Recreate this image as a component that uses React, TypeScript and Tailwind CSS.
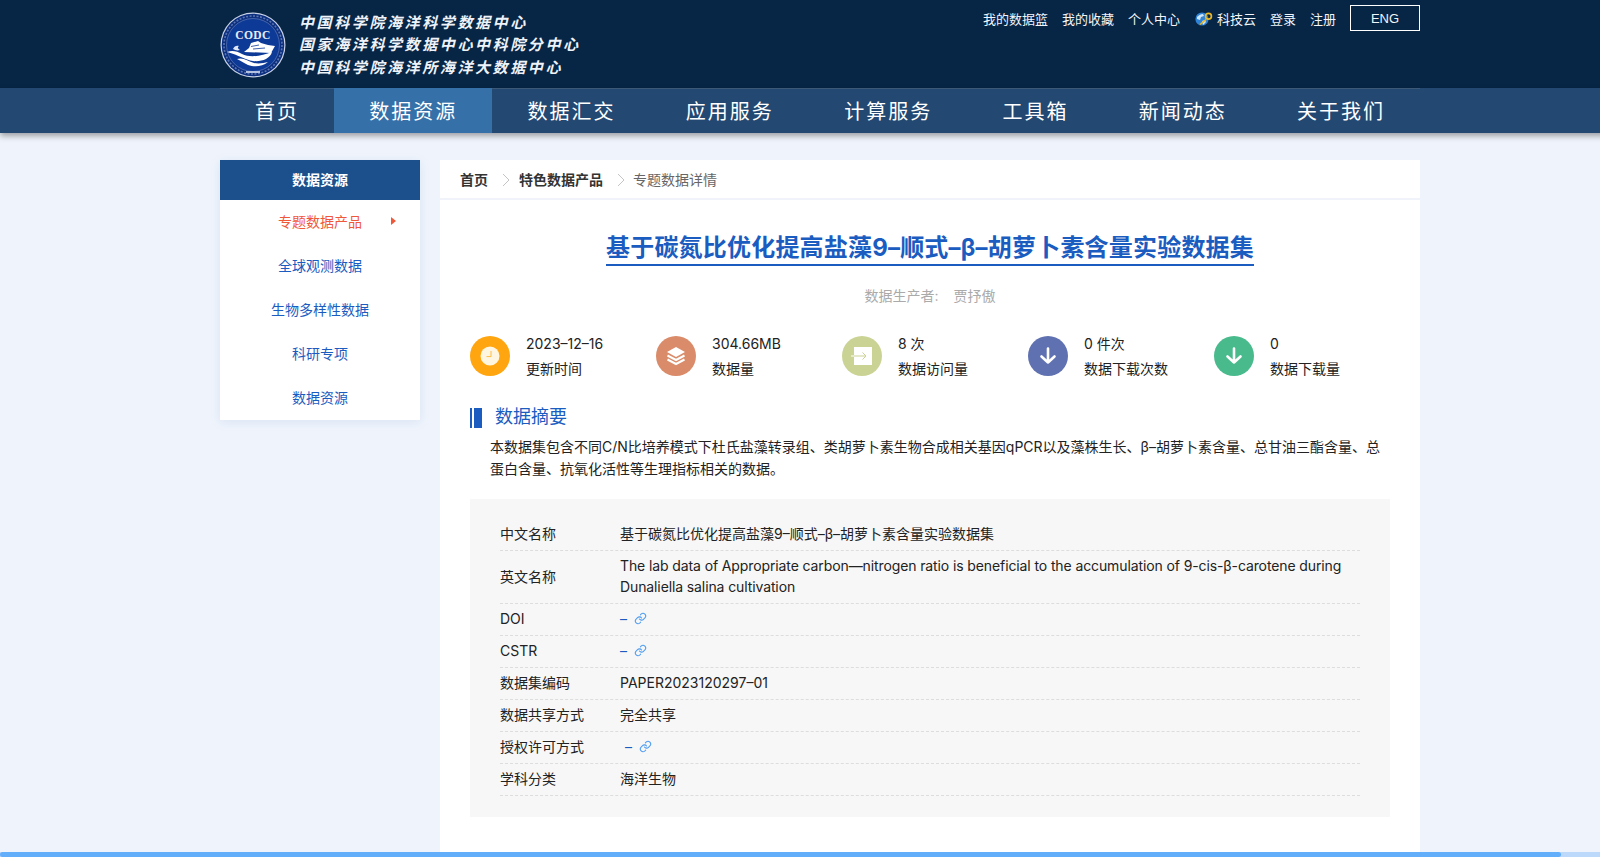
import React from "react";

const nav = ["首页", "数据资源", "数据汇交", "应用服务", "计算服务", "工具箱", "新闻动态", "关于我们"];
const side = ["专题数据产品", "全球观测数据", "生物多样性数据", "科研专项", "数据资源"];

function Logo() {
  return (
    <svg width="66" height="66" viewBox="0 0 66 66" className="shrink-0">
      <circle cx="33" cy="33" r="32.5" fill="#c9d3e6" />
      <circle cx="33" cy="33" r="31.3" fill="#0d2f7f" />
      <circle cx="33" cy="33" r="26.500" fill="#0e3a97" stroke="#7f97c9" strokeWidth="0.5" />
      <circle cx="33" cy="33" r="29" fill="none" stroke="#8ea5d2" strokeWidth="1.6" strokeDasharray="2 1.5" opacity="0.6" />
      <text x="33" y="27" textAnchor="middle" fontFamily="Liberation Serif" fontWeight="700" fontSize="11.500" letterSpacing="0.4" fill="#e8edf7">CODC</text>
      <path d="M24 40L29 36l2-5 7-2 3 2 7 2 7 1-4 7z" fill="#fff" />
      <path d="M31 34.500l8-1.500M33 37l12-1" stroke="#0e3a97" strokeWidth="0.8" />
      <path d="M7 40c5-2 10-1 15 2 8 4 20 2 30-2-2 7-11 10-19 9-8-1-14-6-26-9z" fill="#fff" />
      <path d="M17 47c6-2 11 2 17 4 5 1 10 0 14-1-6 5-14 5-20 3-4-2-7-4-11-6z" fill="#fff" />
      <path d="M13 37c1-3 4-4 6-3-2 1-1 3 1 4-3 1-5 0-7-1z" fill="#dfe6f4" />
      <rect x="26" y="59" width="14" height="2" fill="#b5c3e0" />
    </svg>
  );
}

function Globe() {
  return (
    <svg width="18" height="14" viewBox="0 0 18 14" className="shrink-0">
      <circle cx="7" cy="7" r="6.6" fill="#2f83d6" />
      <path d="M2 5c2-2 4-3 6-3l1 2-3 1-1 3-3-1zM7 9l3-1 1 2-3 3z" fill="#cfe6f8" />
      <path d="M5 12.500l6-5" stroke="#e9b723" strokeWidth="1.6" />
      <circle cx="13.500" cy="4.200" r="2.900" fill="none" stroke="#e9b723" strokeWidth="1.7" />
    </svg>
  );
}

function Chevron() {
  return (
    <svg width="8" height="14" viewBox="0 0 8 14" className="shrink-0">
      <path d="M1 1l6 6-6 6" fill="none" stroke="#c4c4c4" strokeWidth="1" />
    </svg>
  );
}

function DownIcon() {
  return (
    <svg width="18" height="18" viewBox="0 0 18 18">
      <path d="M9 1.500v14M2.500 9.500L9 15.500l6.500-6" fill="none" stroke="#fff" strokeWidth="2.600" strokeLinecap="round" strokeLinejoin="round" />
    </svg>
  );
}

const stats = [
  {
    v: "2023–12–16", l: "更新时间", bg: "bg-[#ffa50f]",
    icon: (
      <svg width="22" height="22" viewBox="0 0 22 22">
        <circle cx="11" cy="11" r="9.500" fill="#fff6e2" />
        <path d="M12 6v5.600H7.500" fill="none" stroke="#ffbc45" strokeWidth="1" />
      </svg>
    ),
  },
  {
    v: "304.66MB", l: "数据量", bg: "bg-[#da8b69]",
    icon: (
      <svg width="22" height="22" viewBox="0 0 22 22">
        <path d="M11 2l9 5-9 5-9-5z" fill="#fff" />
        <path d="M2.500 10.500L11 15l8.500-4.500M2.500 14.500L11 19l8.500-4.500" fill="none" stroke="#fff" strokeWidth="2" />
      </svg>
    ),
  },
  {
    v: "8 次", l: "数据访问量", bg: "bg-[#cbd394]",
    icon: (
      <svg width="22" height="22" viewBox="0 0 22 22">
        <rect x="3" y="2" width="18" height="18" fill="#fff" />
        <path d="M0 11h15M11.500 7.500L15 11l-3.500 3.500" fill="none" stroke="#cbd394" strokeWidth="1" />
        <path d="M0 10.500h3v1H0z" fill="#fff" />
      </svg>
    ),
  },
  { v: "0 件次", l: "数据下载次数", bg: "bg-[#5f71b0]", icon: <DownIcon /> },
  { v: "0", l: "数据下载量", bg: "bg-[#48ba8b]", icon: <DownIcon /> },
];

function LinkDash({ extra = "" }: { extra?: string }) {
  return (
    <span className={"flex items-center gap-[7px] " + extra}>
      <span className="text-[#1a5cbf]">–</span>
      <svg width="13" height="13" viewBox="0 0 24 24" fill="none" stroke="#4f9df2" strokeWidth="2" strokeLinecap="round" strokeLinejoin="round">
        <path d="M10 13a5 5 0 0 0 7.500.500l3-3a5 5 0 0 0-7-7l-1.700 1.700" />
        <path d="M14 11a5 5 0 0 0-7.500-.500l-3 3a5 5 0 0 0 7 7l1.700-1.700" />
      </svg>
    </span>
  );
}

const rows: [string, React.ReactNode, string?][] = [
  ["中文名称", "基于碳氮比优化提高盐藻9–顺式–β–胡萝卜素含量实验数据集"],
  ["英文名称", <span className="tracking-[-0.11px]">The lab data of Appropriate carbon—nitrogen ratio is beneficial to the accumulation of 9-cis-β-carotene during Dunaliella salina cultivation</span>, "min-h-[53px]"],
  ["DOI", <LinkDash />],
  ["CSTR", <LinkDash />],
  ["数据集编码", "PAPER2023120297–01"],
  ["数据共享方式", "完全共享"],
  ["授权许可方式", <LinkDash extra="pl-[5px]" />],
  ["学科分类", "海洋生物"],
];

export default function App() {
  return (
    <div className="relative h-screen overflow-hidden bg-[#eff4fc] text-sm text-[#222] [font-family:'Inter','Noto_Sans_CJK_SC',sans-serif]">
      <div className="w-[1640px]">
        <header className="h-[88px] bg-[#072545]">
          <div className="mx-auto flex h-full w-[1200px] justify-between">
            <div className="flex items-center gap-[13px] pt-[1px]">
              <Logo />
              <div className="font-bold italic text-[15px] leading-[22.5px] tracking-[2.6px] text-[#eef3fa] [font-family:'Noto_Sans_CJK_SC',sans-serif]">
                <div>中国科学院海洋科学数据中心</div>
                <div>国家海洋科学数据中心中科院分中心</div>
                <div>中国科学院海洋所海洋大数据中心</div>
              </div>
            </div>
            <div className="mt-[5px] flex h-[26px] items-center pt-[2px] text-[13px] text-[#f2f5f9]">
              <span>我的数据篮</span>
              <span className="ml-[14px]">我的收藏</span>
              <span className="ml-[14px]">个人中心</span>
              <span className="ml-[15px] flex items-center gap-[4px]"><Globe />科技云</span>
              <span className="ml-[14px]">登录</span>
              <span className="ml-[14px]">注册</span>
              <span className="-mt-[2px] ml-[14px] flex h-[26px] w-[70px] items-center justify-center border border-white pt-[2px] [font-family:'Liberation_Sans',sans-serif]">ENG</span>
            </div>
          </div>
        </header>

        <nav className="relative z-10 h-[45px] bg-[#234872] shadow-[0_3px_6px_rgba(0,0,0,0.35)]">
          <div className="mx-auto flex h-full w-[1200px] gap-[0.3px] border-t border-[#3c5a78] text-[20px] leading-[49px] tracking-[2px] text-white">
            {nav.map((n, i) => (
              <div key={n} className={"-mt-px h-[45px] px-[35px] " + (i === 1 ? "bg-[#3670a8]" : "")}>{n}</div>
            ))}
          </div>
        </nav>

        <div className="mx-auto mt-[27px] flex w-[1200px] items-start gap-[20px]">
          <aside className="w-[200px] shrink-0 bg-white shadow-[0_2px_10px_rgba(40,90,170,0.1)]">
            <div className="h-10 bg-[#1c508c] text-center font-bold leading-10 text-white">数据资源</div>
            {side.map((s, i) => (
              <div key={i} className={"relative h-11 text-center leading-[44px] " + (i === 0 ? "text-[#f0583a]" : "text-[#1a5cbf]")}>
                {s}
                {i === 0 && <span className="absolute left-[171px] top-[17px] h-0 w-0 border-y-[4px] border-l-[5px] border-y-transparent border-l-[#f0583a]" />}
              </div>
            ))}
          </aside>

          <main className="h-[720px] w-[980px] min-w-0 bg-white">
            <div className="flex h-10 items-center border-b-2 border-[#f0f4fa] pl-[20px] pt-[1px]">
              <span className="font-bold text-[#333]">首页</span>
              <span className="ml-[14px] mr-[9px]"><Chevron /></span>
              <span className="font-bold text-[#333]">特色数据产品</span>
              <span className="ml-[14px] mr-[8px]"><Chevron /></span>
              <span className="text-[#666]">专题数据详情</span>
            </div>

            <div className="px-[30px]">
              <div className="pt-[32px] text-center">
                <span className="inline-block border-b-2 border-[#1a5cbf] text-[24px] font-bold leading-[32px] tracking-[0.2px] text-[#1a5cbf]">
                  基于碳氮比优化提高盐藻9–顺式–β–胡萝卜素含量实验数据集
                </span>
              </div>
              <div className="mt-[20px] flex h-5 items-center justify-center text-[#aaa]">
                <span>数据生产者:</span>
                <span className="ml-[15px]">贾抒傲</span>
              </div>

              <div className="mt-[30px] flex h-10 items-center">
                {stats.map((s) => (
                  <div key={s.l} className="flex w-[186px] shrink-0 items-center gap-[16px]">
                    <div className={"flex h-10 w-10 shrink-0 items-center justify-center rounded-full " + s.bg}>{s.icon}</div>
                    <div className="leading-[25px]">
                      <div>{s.v}</div>
                      <div>{s.l}</div>
                    </div>
                  </div>
                ))}
              </div>

              <div className="mt-[32px] flex h-5 items-center">
                <span className="h-5 w-[2px] bg-[#1a5cbf]" />
                <span className="ml-[2px] h-5 w-[8px] bg-[#1a5cbf]" />
                <span className="ml-[13px] pb-[2px] text-[18px] text-[#1a5cbf]">数据摘要</span>
              </div>

              <p className="mt-[8px] pl-[20px] leading-[22px]">
                本数据集包含不同C/N比培养模式下杜氏盐藻转录组、类胡萝卜素生物合成相关基因qPCR以及藻株生长、β–胡萝卜素含量、总甘油三酯含量、总蛋白含量、抗氧化活性等生理指标相关的数据。
              </p>

              <div className="mt-[19px] bg-[#f7f7f7] px-[30px] pb-[21px] pt-[20px]">
                {rows.map(([k, v, c]) => (
                  <div key={k} className={"flex min-h-8 items-center border-b border-dashed border-[#dddddd] pb-[2px] leading-[21px] " + (c ?? "")}>
                    <div className="w-[120px] shrink-0">{k}</div>
                    <div className="flex-1">{v}</div>
                  </div>
                ))}
              </div>
            </div>
          </main>
        </div>
      </div>

      <div className="absolute bottom-0 left-0 h-[5px] w-full bg-[#bcd9fb]">
        <div className="h-full w-[1561px] rounded-[3px] bg-[#63aefb]" />
      </div>
    </div>
  );
}
